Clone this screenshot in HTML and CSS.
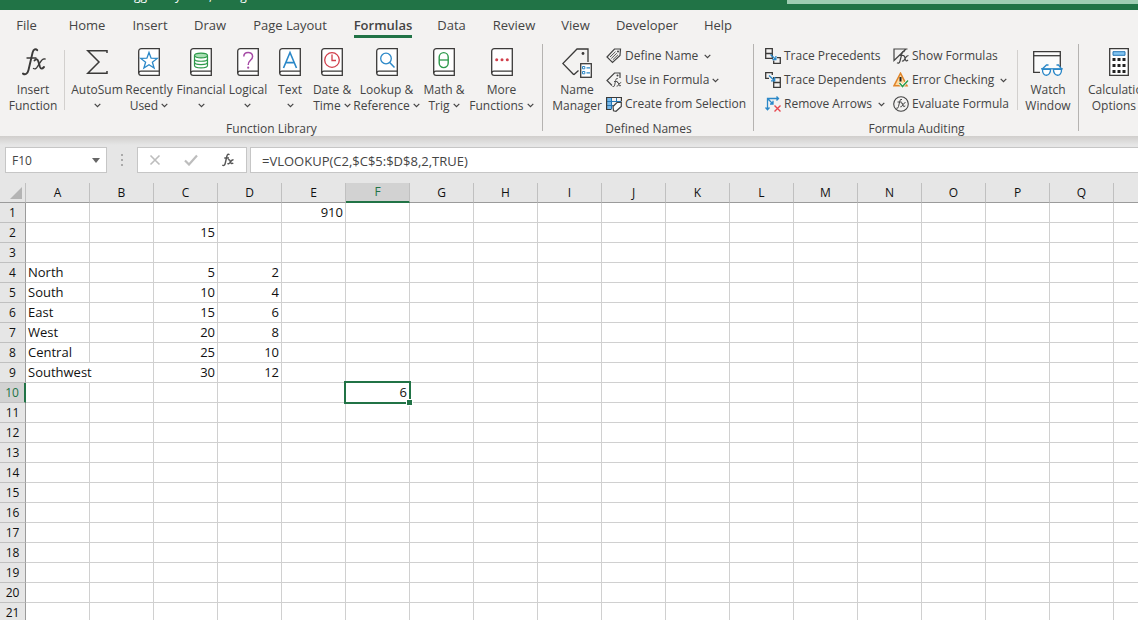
FILE: index.html
```html
<!DOCTYPE html>
<html lang="en">
<head>
<meta charset="utf-8">
<title>Workbook</title>
<link rel="stylesheet" href="styles.css">
</head>
<body>
<svg class="defs" aria-hidden="true">
  <symbol id="book" viewBox="0 0 22 28"><path d="M3.5.7H21.3V27.3H3.2Q.7 27.3.7 24.8V3.5Q.7.7 3.5.7Z" fill="#fff" stroke="#3b3a39" stroke-width="1.3"/><path d="M.7 25.2Q.7 23.2 3 23.2H21.3" fill="none" stroke="#3b3a39" stroke-width="1.3"/></symbol>
  <symbol id="chev" viewBox="0 0 7 5"><path d="M.7.9 3.5 3.7 6.3.9" fill="none" stroke="#444" stroke-width="1.2"/></symbol>
</svg>

<header class="titlebar">
  <div class="doc-title"><span>gg</span><span>y</span><span>,</span><span>g</span></div>
  <div class="search"></div>
</header>

<nav class="tabs">
  <button>File</button><button>Home</button><button>Insert</button><button>Draw</button><button>Page Layout</button><button class="active">Formulas</button><button>Data</button><button>Review</button><button>View</button><button>Developer</button><button>Help</button>
</nav>

<section class="ribbon">
  <div class="group library">
    <div class="tools">
      <button class="big w-insert"><svg width="28" height="28" viewBox="0 0 28 28"><g fill="none" stroke="#3b3a39" stroke-linecap="round"><path d="M18.200 2.200C16.800.4 14.500 1.200 13.600 4.500L9.500 22C8.600 25.800 6.300 27.200 4 25.600" stroke-width="1.900"/><path d="M8 10H17" stroke-width="1.300"/><path d="M15.500 12.500Q18.200 9.400 19.500 14L21 19Q22.200 22.200 25 19" stroke-width="1.900"/><path d="M26 11Q23.500 10.200 21.500 14L18.500 18.500Q16.800 21.800 14.500 20.500" stroke-width="1.400"/></g></svg><span>Insert<br>Function</span></button>
      <i class="split"></i>
      <button class="big w-a"><svg width="22" height="28" viewBox="0 0 22 28"><path d="M21 5V2.700H1.800L13 14 1.800 25.300H21V23" fill="none" stroke="#3b3a39" stroke-width="1.500"/></svg><span>AutoSum<br><svg class="chev"><use href="#chev"/></svg></span></button>
      <button class="big w-a"><svg width="22" height="28" viewBox="0 0 22 28"><use href="#book"/><path d="M11 4.500 13.100 10.200 19.200 10.400 14.400 14.200 16.100 20 11 16.700 5.900 20 7.600 14.200 2.800 10.400 8.900 10.200Z" fill="none" stroke="#2b88c8" stroke-width="1.300"/></svg><span>Recently<br>Used <svg class="chev"><use href="#chev"/></svg></span></button>
      <button class="big w-a"><svg width="22" height="28" viewBox="0 0 22 28"><use href="#book"/><g fill="#a9dfb4" stroke="#2e9a4b" stroke-width="1.200"><path d="M4.500 7.500V17.500C4.500 20.700 17.500 20.700 17.500 17.500V7.500" fill="#fff"/><ellipse cx="11" cy="7.500" rx="6.500" ry="2.400"/><path d="M4.500 11C4.500 14 17.500 14 17.500 11M4.500 14.300C4.500 17.300 17.500 17.300 17.500 14.300" fill="none"/></g></svg><span>Financial<br><svg class="chev"><use href="#chev"/></svg></span></button>
      <button class="big w-b"><svg width="22" height="28" viewBox="0 0 22 28"><use href="#book"/><path d="M6.800 8.500C6.800 3 15.600 3 15.600 8.500C15.600 12.300 11.200 11.800 11.200 17" fill="none" stroke="#a64ca6" stroke-width="1.500"/><circle cx="11.200" cy="19.700" r="1.100" fill="#a64ca6"/></svg><span>Logical<br><svg class="chev"><use href="#chev"/></svg></span></button>
      <button class="big w-b"><svg width="22" height="28" viewBox="0 0 22 28"><use href="#book"/><path d="M4.500 20 11 4.500 17.500 20M6.800 14.600H15.200" fill="none" stroke="#2b88c8" stroke-width="1.600"/></svg><span>Text<br><svg class="chev"><use href="#chev"/></svg></span></button>
      <button class="big w-b"><svg width="22" height="28" viewBox="0 0 22 28"><use href="#book"/><circle cx="11" cy="12" r="7.300" fill="none" stroke="#d13f4b" stroke-width="1.300"/><path d="M11 6.500V12.500H15" fill="none" stroke="#d13f4b" stroke-width="1.300"/></svg><span>Date &amp;<br>Time <svg class="chev"><use href="#chev"/></svg></span></button>
      <button class="big w-c"><svg width="22" height="28" viewBox="0 0 22 28"><use href="#book"/><circle cx="10" cy="10.500" r="5.300" fill="none" stroke="#2b88c8" stroke-width="1.300"/><path d="M13.700 14.500 18.500 19.500" stroke="#2b88c8" stroke-width="1.500"/></svg><span>Lookup &amp;<br>Reference <svg class="chev"><use href="#chev"/></svg></span></button>
      <button class="big w-d"><svg width="22" height="28" viewBox="0 0 22 28"><use href="#book"/><rect x="6.200" y="4.600" width="9" height="15" rx="4.500" fill="none" stroke="#2e9a4b" stroke-width="1.400"/><path d="M6.200 12H15.200" stroke="#2e9a4b" stroke-width="1.300"/></svg><span>Math &amp;<br>Trig <svg class="chev"><use href="#chev"/></svg></span></button>
      <button class="big w-c"><svg width="22" height="28" viewBox="0 0 22 28"><use href="#book"/><g fill="#d13f4b"><circle cx="5.700" cy="11.700" r="1.500"/><circle cx="11" cy="11.700" r="1.500"/><circle cx="16.300" cy="11.700" r="1.500"/></g></svg><span>More<br>Functions <svg class="chev"><use href="#chev"/></svg></span></button>
    </div>
    <div class="caption">Function Library</div>
  </div>

  <div class="group names">
    <div class="tools">
      <button class="big w-d"><svg width="30" height="30" viewBox="0 0 30 30"><path d="M17 1 26 .8V14M11.800 26.800.8 15.500 15 1H20M11.800 26.800 16.500 22.500" fill="none" stroke="#3b3a39" stroke-width="1.300"/><circle cx="21" cy="5.500" r="1.400" fill="#3b3a39"/><rect x="18.700" y="15.700" width="10.600" height="13.600" fill="#fff" stroke="#3b3a39" stroke-width="1.300"/><path d="M24.500 19.800H28M24.500 24.800H28" stroke="#2b88c8" stroke-width="1.200"/><path d="M20.500 18.500H22.800V20.800H20.500ZM20.500 23.500H22.800V25.800H20.500Z" fill="none" stroke="#2b88c8"/></svg><span class="tight">Name<br>Manager</span></button>
      <div class="stack">
        <button class="small"><svg width="16" height="16" viewBox="0 0 16 16"><path d="M1 9 8.500 1H14.500L14 7.500 6.500 14.500Z" fill="none" stroke="#444" stroke-width="1.200"/><circle cx="12" cy="3.500" r="1" fill="#444"/><path d="M4 9 9.500 3.700M5.300 10.500 10.800 5.200M6.800 11.800 12 6.800" stroke="#555"/></svg><span>Define Name</span><svg class="chev far"><use href="#chev"/></svg></button>
        <button class="small"><svg width="16" height="16" viewBox="0 0 16 16"><path d="M6 13.500 1 8.500 8.500 1H14V6" fill="none" stroke="#444" stroke-width="1.200"/><circle cx="11.500" cy="3.500" r="1" fill="#444"/><path d="M11.800 6.500Q10 5.800 9.600 8.500L8.700 13Q8.200 15.400 6.500 14.500M8 9.500H11.500M11 10.500Q12.300 9.500 12.700 12 13.200 15 15 13.500M15.200 10.500Q14 10.500 12.700 12.500 11.600 14.800 10.600 14.200" fill="none" stroke="#555"/></svg><span>Use in Formula</span><svg class="chev near"><use href="#chev"/></svg></button>
        <button class="small"><svg width="16" height="16" viewBox="0 0 16 16"><path d="M.6 1.500H5.500V13.500H.6Z" fill="#75b8ea"/><path d="M5.500 1.500V13.500M.6 5.500H15M.6 9.500H8M10.500 1.500V5.500" fill="none" stroke="#2777b5"/><path d="M.6 5.500V1.500H15.400V5.500M.6 5.500V13.500H5" fill="none" stroke="#3b3a39" stroke-width="1.200"/><path d="M7 10.500 11 6.500H15.300V10.500L10 15.300 7.500 14.800Z" fill="#fff" stroke="#444" stroke-width="1.200"/></svg><span>Create from Selection</span></button>
      </div>
    </div>
    <div class="caption">Defined Names</div>
  </div>

  <div class="group auditing">
    <div class="tools">
      <div class="stack col-trace">
        <button class="small"><svg width="16" height="16" viewBox="0 0 16 16"><path d="M.7.7H7.300V10.300H.7ZM.7 5.500H7.300M12 9.700H15.300V15.300H8.700V12.500" fill="none" stroke="#3b3a39" stroke-width="1.300"/><path d="M5.500 6.500 10.700 11.500M10.900 8V11.700H7.300" fill="none" stroke="#2b88c8" stroke-width="1.300"/></svg><span>Trace Precedents</span></button>
        <button class="small"><svg width="16" height="16" viewBox="0 0 16 16"><path d="M4 6.300H.7V.7H7.300V3M8.700 5.700H15.300V15.300H8.700ZM8.700 10.500H15.300" fill="none" stroke="#3b3a39" stroke-width="1.300"/><path d="M4 3.500 9.500 8.700M9.700 5V8.900H6" fill="none" stroke="#2b88c8" stroke-width="1.300"/></svg><span>Trace Dependents</span></button>
        <button class="small"><svg width="16" height="16" viewBox="0 0 16 16"><path d="M2.500 14V2.500H13.500M.5 11.500 2.500 13.800 4.500 11.500M11.500.5 13.500 2.500 11.500 4.500M3 3 8 8M8 4.800V8H5" fill="none" stroke="#2b88c8" stroke-width="1.300"/><path d="M9.500 9.500 15.500 15.500M15.500 9.500 9.500 15.500" stroke="#e8474f" stroke-width="1.400"/></svg><span>Remove Arrows</span><svg class="chev far"><use href="#chev"/></svg></button>
      </div>
      <div class="stack col-check">
        <button class="small"><svg width="16" height="16" viewBox="0 0 16 16"><path d="M14.500 1H1V12.500L13 1" fill="none" stroke="#444" stroke-width="1.200"/><path d="M11.500 3.800Q9.500 2.500 8.800 6L7 13Q6.200 16 4 14.800M6.500 7.500H11M10 8Q11.600 7 12 10 12.600 14.500 15 12M15.500 7.500Q13.800 7.500 12 10.500 10.600 13.800 9 12.800" fill="none" stroke="#444" stroke-width="1.200"/></svg><span>Show Formulas</span></button>
        <button class="small"><svg width="16" height="16" viewBox="0 0 16 16"><path d="M7.500 1.200 14 13.800H1Z" fill="#ffd9a0" stroke="#e0862b" stroke-width="1.500"/><path d="M7.500 5V9.500" stroke="#222" stroke-width="2"/><path d="M6.500 11 9.500 14.500 15 8.500" fill="none" stroke="#fff" stroke-width="2.800"/><path d="M6.500 11 9.500 14.500 15 8.500" fill="none" stroke="#2e9a4b" stroke-width="1.500"/></svg><span>Error Checking</span><svg class="chev far"><use href="#chev"/></svg></button>
        <button class="small"><svg width="16" height="16" viewBox="0 0 16 16"><circle cx="8" cy="8" r="7.300" fill="none" stroke="#444" stroke-width="1.100"/><path d="M9 3.500Q7.200 2.500 6.700 5.500L5.500 10.500Q5 13 3.300 12.200M4.500 6H8.500M8 7Q9.300 6 9.700 8.500 10.300 11.800 12.300 10M12.500 6.500Q11 6.700 9.700 9 8.400 11.500 7.300 10.800" fill="none" stroke="#444"/></svg><span>Evaluate Formula</span></button>
      </div>
      <i class="split"></i>
      <button class="big w-d"><svg width="30" height="28" viewBox="0 0 30 28"><path d="M7 24.300H.7V3.700H27.300V19" fill="#fbfbfb" stroke="#3b3a39" stroke-width="1.300"/><path d="M.7 7.700H27.300" stroke="#3b3a39" stroke-width="1.300"/><g fill="#fff" stroke="#2b88c8" stroke-width="1.300"><path d="M8 20.800H29.800"/><path d="M9.500 21.300C9 29.500 18 29 17.500 21.300ZM20.500 21.300C20 29 29 29.500 28.500 21.300Z"/><path d="M9.500 20.800 13.500 17H15.500M28.500 20.800 25.500 17H23.500" fill="none"/></g></svg><span>Watch<br>Window</span></button>
    </div>
    <div class="caption">Formula Auditing</div>
  </div>

  <div class="group calc">
    <div class="tools">
      <button class="big w-calc"><svg width="20" height="28" viewBox="0 0 20 28"><path d="M.7.7H19.300V27.300H.7Z" fill="#fff" stroke="#3b3a39" stroke-width="1.300"/><path d="M4 3.700H16V7.300H4Z" fill="#83c5f2" stroke="#2777b5"/><path d="M3.500 11.500H16.500M3.500 17.500H16.500M3.500 23.500H16.500" stroke="#222" stroke-width="3" stroke-dasharray="3 2"/></svg><span>Calculation<br>Options <svg class="chev"><use href="#chev"/></svg></span></button>
    </div>
  </div>
</section>

<section class="formula-row">
  <div class="namebox"><input aria-label="Name Box" value="F10"><button aria-label="Open name list"><svg width="8" height="5" viewBox="0 0 8 5"><path d="M0 0H8L4 5Z" fill="#666"/></svg></button></div>
  <svg class="grip" width="4" height="12" viewBox="0 0 4 12"><path d="M1 1H3M1 6H3M1 11H3" stroke="#aaa" stroke-width="2"/></svg>
  <div class="actions">
    <button aria-label="Cancel"><svg width="12" height="12" viewBox="0 0 12 12"><path d="M1.500 1.500 10.500 10.500M10.500 1.500 1.500 10.500" stroke="#bdbdbd" stroke-width="1.600"/></svg></button>
    <button aria-label="Enter"><svg width="14" height="12" viewBox="0 0 14 12"><path d="M1 6.500 5 10.500 13 1.500" fill="none" stroke="#bdbdbd" stroke-width="2.200"/></svg></button>
    <button aria-label="Insert Function"><svg width="14" height="14" viewBox="0 0 14 14"><path d="M8.500 1.700Q6.500.3 5.800 3.500L4.300 10Q3.600 13.500 1.300 12.200M3.300 5H8M7 7Q8.600 5.800 9.200 8.500 9.900 11.600 12.300 10M12.500 6.800Q11 6.700 9.300 9 7.800 11.500 6.400 10.500" fill="none" stroke="#555" stroke-width="1.400"/></svg></button>
  </div>
  <input class="formula" aria-label="Formula Bar" value="=VLOOKUP(C2,$C$5:$D$8,2,TRUE)">
</section>

<main class="sheet"><table id="grid"></table></main>
<script src="grid.js"></script>
</body>
</html>
```
FILE: grid.js
```js
const columns = "ABCDEFGHIJKLMNOPQR".split("");
const rowCount = 21;
const active = { col: "F", row: 10 };
const values = {
  E1: 910, C2: 15,
  A4: "North", C4: 5, D4: 2,
  A5: "South", C5: 10, D5: 4,
  A6: "East", C6: 15, D6: 6,
  A7: "West", C7: 20, D7: 8,
  A8: "Central", C8: 25, D8: 10,
  A9: "Southwest", C9: 30, D9: 12,
  F10: 6
};

const table = document.getElementById("grid");
const head = table.createTHead().insertRow();
const corner = document.createElement("th");
corner.className = "corner";
corner.innerHTML = '<svg width="12" height="12" viewBox="0 0 12 12"><path d="M12 0V12H0Z" fill="#b4b4b4"/></svg>';
head.append(corner);
for (const col of columns) {
  const th = document.createElement("th");
  th.scope = "col";
  th.textContent = col;
  if (col === active.col) th.className = "current";
  head.append(th);
}

const body = table.createTBody();
for (let row = 1; row <= rowCount; row++) {
  const tr = body.insertRow();
  const th = document.createElement("th");
  th.scope = "row";
  th.textContent = row;
  if (row === active.row) th.className = "current";
  tr.append(th);
  for (const col of columns) {
    const td = tr.insertCell();
    const value = values[col + row];
    if (value === undefined) continue;
    td.textContent = value;
    if (typeof value === "number") td.classList.add("num");
    if (value === "Southwest") td.classList.add("spill");
    if (col === active.col && row === active.row) {
      td.classList.add("selected");
      const handle = document.createElement("i");
      handle.className = "handle";
      td.append(handle);
    }
  }
}
```
FILE: styles.css
```css
* { box-sizing: border-box; }
body {
  margin: 0;
  height: 100vh;
  overflow: hidden;
  display: flex;
  flex-direction: column;
  background: #e6e6e6;
  color: #444;
  font: 12px/16px "Open Sans", "Noto Sans", sans-serif;
}
button, input { font: inherit; color: inherit; border: 0; padding: 0; margin: 0; background: none; }
svg { display: block; flex: none; }
.defs { position: absolute; width: 0; height: 0; }

.titlebar {
  display: flex;
  flex: none;
  justify-content: space-between;
  height: 10px;
  overflow: hidden;
  background: #217346;
}
.doc-title {
  display: flex;
  align-items: flex-end;
  gap: 28px;
  height: 4px;
  padding-left: 134px;
  color: #fff;
}
.search { width: 351px; height: 4px; background: #9fcdb3; }

.tabs {
  display: grid;
  flex: none;
  grid-template-columns: 53px 68px 58px 62px 98px 88px 49px 76px 47px 96px 46px;
  justify-items: center;
  height: 32px;
  background: #f3f2f1;
  font-size: 13px;
}
.tabs button { height: 28px; padding-top: 5px; white-space: nowrap; border-bottom: 3px solid transparent; }
.tabs .active { font-weight: 600; border-color: #217346; }

.ribbon {
  display: flex;
  flex: none;
  height: 94px;
  overflow: hidden;
  background: #f3f2f1;
}
.group {
  display: flex;
  flex: none;
  flex-direction: column;
  justify-content: space-between;
  position: relative;
}
.group:not(.calc)::after {
  content: "";
  position: absolute;
  top: 2px;
  bottom: 5px;
  right: 0;
  width: 1px;
  background: #b5b3b1;
}
.library { width: 543px; }
.names { width: 211px; }
.auditing { width: 325px; }
.tools { display: flex; }
.library .tools { padding-left: 8px; }
.names .tools { padding-left: 10px; }
.auditing .tools { padding-left: 11px; }
.caption { text-align: center; line-height: 14px; }

.big {
  display: flex;
  flex: none;
  flex-direction: column;
  align-items: center;
  gap: 6px;
  padding-top: 6px;
  white-space: nowrap;
}
.big .tight { margin-top: -2px; }
.big .chev { display: inline-block; vertical-align: 2px; }
.chev { width: 7px; height: 5px; }
.w-insert { width: 50px; }
.w-a { width: 52px; }
.w-b { width: 42px; }
.w-c { width: 67px; }
.w-d { width: 48px; }
.w-calc { width: 80px; }
.split { width: 1px; height: 60px; margin: 8px 6px 0; background: #d2d0ce; }

.stack { display: flex; flex-direction: column; padding-top: 2px; }
.names .stack { padding-left: 5px; }
.small { display: flex; align-items: center; gap: 3px; height: 24px; white-space: nowrap; }
.col-trace { width: 128px; }
.col-check { width: 118px; }
.far { margin-left: 3px; }

.formula-row {
  display: flex;
  flex: none;
  height: 47px;
  padding: 11px 0 10px 5px;
  background: linear-gradient(#d0cecc, #e6e6e6 9px);
  font-size: 13px;
}
.namebox, .actions, .formula { background: #fff; border: 1px solid #c6c6c6; }
.namebox { display: flex; align-items: center; width: 102px; padding: 0 6px; font-size: 12px; }
.namebox input { flex: 1; min-width: 0; padding-top: 2px; }
.grip { margin: 7px 13px 0; }
.actions { display: flex; align-items: center; justify-content: space-around; width: 110px; }
.formula { flex: 1; min-width: 0; margin-left: 3px; padding: 1px 11px 0; border-right: 0; }

.sheet { flex: 1; overflow: hidden; }
#grid {
  width: 1178px;
  table-layout: fixed;
  border-collapse: separate;
  border-spacing: 0;
  background: #fff;
  color: #111;
  font: 13px/19px "Open Sans", "Noto Sans", sans-serif;
}
#grid tr { height: 20px; }
#grid th, #grid td { padding: 0; height: 20px; border: 0 solid #d0d0d0; border-width: 0 1px 1px 0; white-space: nowrap; }
#grid th { font-weight: 400; background: #e6e6e6; font-size: 12px; }
#grid thead th { border-color: #c0c0c0; border-bottom-color: #9b9b9b; }
#grid tbody th { border-color: #c0c0c0; border-right-color: #9b9b9b; }
#grid .corner { width: 26px; }
.corner svg { margin-left: 10px; }
#grid td { padding-left: 2px; }
#grid .num { padding: 0 2px 0 0; text-align: right; }
#grid .spill { border-right-color: transparent; }
#grid th.current { background: #d2d2d2; color: #217346; }
#grid thead th.current { border-bottom: 2px solid #217346; line-height: 18px; }
#grid tbody th.current { border-right: 2px solid #217346; }
#grid .selected { position: relative; }
.selected::before {
  content: "";
  position: absolute;
  inset: -2px;
  border: 2px solid #217346;
}
.handle {
  position: absolute;
  right: -4px;
  bottom: -4px;
  width: 7px;
  height: 7px;
  background: #217346;
  border: 1px solid #fff;
}
```
